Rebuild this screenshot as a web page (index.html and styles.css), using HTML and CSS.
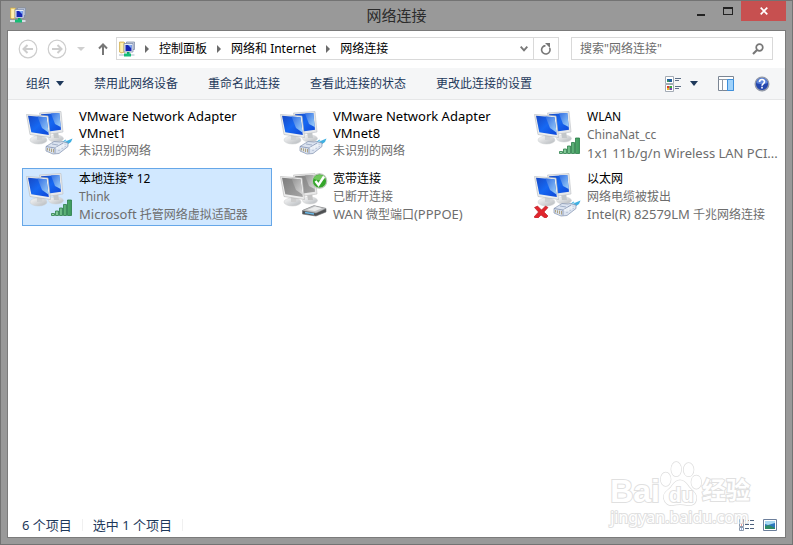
FILE: index.html
```html
<!DOCTYPE html>
<html lang="zh-CN">
<head>
  <meta charset="UTF-8">
  <meta name="viewport" content="width=device-width, initial-scale=1.0">
  <title>网络连接</title>
  <link rel="stylesheet" href="styles.css">
</head>
<body>

  <!-- Ícones reutilizados -->
  <svg class="defs" width="0" height="0" aria-hidden="true">
    <defs>
      <linearGradient id="azul" x1="0" y1="0" x2="1" y2="1">
        <stop offset="0" stop-color="#1748c4"/>
        <stop offset="0.5" stop-color="#1668f2"/>
        <stop offset="1" stop-color="#0f48d8"/>
      </linearGradient>
      <linearGradient id="brilho" x1="0" y1="0" x2="1" y2="1">
        <stop offset="0" stop-color="#2f6ce2"/>
        <stop offset="1" stop-color="#9fd2fa"/>
      </linearGradient>
      <linearGradient id="cinza" x1="0" y1="0" x2="1" y2="1">
        <stop offset="0" stop-color="#7d7d7d"/>
        <stop offset="1" stop-color="#a5a5a5"/>
      </linearGradient>
      <linearGradient id="cinzaBrilho" x1="0" y1="0" x2="1" y2="1">
        <stop offset="0" stop-color="#929292"/>
        <stop offset="1" stop-color="#d8d8d8"/>
      </linearGradient>
      <linearGradient id="base" x1="0" y1="0" x2="1" y2="1">
        <stop offset="0" stop-color="#fafafa"/>
        <stop offset="1" stop-color="#b4b8bc"/>
      </linearGradient>
      <linearGradient id="verde" x1="0" y1="0" x2="1" y2="0">
        <stop offset="0" stop-color="#9ad9ab"/>
        <stop offset="1" stop-color="#3c9a5b"/>
      </linearGradient>

      <symbol id="monitores" viewBox="0 0 48 48">
        <ellipse cx="30" cy="30.500" rx="7.500" ry="3.500" fill="url(#base)" stroke="#d0d3d6" stroke-width=".5"/>
        <path d="M27 24l5-1 1 7h-5z" fill="#c3c7ca"/>
        <path d="M13.500 5L35 3.500 37 24 18 27z" fill="#e6e8ea" stroke="#bcc0c4" stroke-width=".6"/>
        <path d="M15 6.300L33.300 5 35 21.800 19 24z" fill="url(#azul)"/>
        <path d="M25 5.600L33.300 5 34.700 19 29 16z" fill="url(#brilho)"/>
        <ellipse cx="12.500" cy="32" rx="8.500" ry="4" fill="url(#base)" stroke="#cbced1" stroke-width=".5"/>
        <path d="M11 25l6 1-1 6h-5z" fill="#cdd0d3"/>
        <path d="M.500 6.500L22 8 24.500 29.500 4 26.500z" fill="#eceeef" stroke="#b4b8bc" stroke-width=".6"/>
        <path d="M2 7.800L20.500 9.300 22.800 27 5.300 24.300z" fill="url(#azul)"/>
        <path d="M11.500 8.600L20.500 9.300 22.500 24.500 16 20z" fill="url(#brilho)"/>
      </symbol>

      <symbol id="monitores-off" viewBox="0 0 48 48">
        <ellipse cx="30" cy="30.500" rx="7.500" ry="3.500" fill="url(#base)" stroke="#d0d0d0" stroke-width=".5"/>
        <path d="M27 24l5-1 1 7h-5z" fill="#c3c3c3"/>
        <path d="M13.500 5L35 3.500 37 24 18 27z" fill="#e8e8e8" stroke="#bebebe" stroke-width=".6"/>
        <path d="M15 6.300L33.300 5 35 21.800 19 24z" fill="url(#cinza)"/>
        <path d="M25 5.600L33.300 5 34.700 19 29 16z" fill="url(#cinzaBrilho)"/>
        <ellipse cx="12.500" cy="32" rx="8.500" ry="4" fill="url(#base)" stroke="#cbcbcb" stroke-width=".5"/>
        <path d="M11 25l6 1-1 6h-5z" fill="#cdcdcd"/>
        <path d="M.500 6.500L22 8 24.500 29.500 4 26.500z" fill="#eee" stroke="#b4b4b4" stroke-width=".6"/>
        <path d="M2 7.800L20.500 9.300 22.800 27 5.300 24.300z" fill="url(#cinza)"/>
        <path d="M11.500 8.600L20.500 9.300 22.500 24.500 16 20z" fill="url(#cinzaBrilho)"/>
      </symbol>

      <symbol id="cabo" viewBox="0 0 48 48">
        <path d="M35.500 34.500l4-3 1 1.500 6-2.500-1.500 3.500-5 3.500z" fill="#3fb0e2"/>
        <path d="M36.500 34.500l3-2.300 1 1.500-2 1.800z" fill="#a3daf2"/>
        <path d="M20 38.500L28 33.500 34 34 36 33.500 42 35v3.500l-9 7-6 .5-7-3z" fill="#dbe3f0" stroke="#8191ae" stroke-width=".7"/>
        <path d="M20 38.500l9 1.500 8-5M29 40v5.500" fill="none" stroke="#8191ae" stroke-width=".8"/>
        <path d="M26 36l6 1M33 39v4M36 37.500V41M39 36v3" stroke="#92a2be" stroke-width=".8" fill="none"/>
        <path d="M29 40l8-4 4 1-8 5z" fill="#f3f6fa" opacity=".8"/>
        <path d="M21.500 40v2.500M23.500 40.300v3M25.500 40.600v3.400M27.500 41v3.500" stroke="#a39467" stroke-width=".8"/>
      </symbol>

      <symbol id="sinal" viewBox="0 0 48 48">
        <g fill="url(#verde)" stroke="#2a7c48" stroke-width=".8">
          <path d="M25.500 43.500h3v2h-3zM29.500 41h3v4.500h-3zM33.500 38h3v7.500h-3zM37.500 34.500h3v11h-3zM41.500 30h4v15.500h-4z"/>
        </g>
      </symbol>

      <symbol id="modem" viewBox="0 0 48 48">
        <path d="M22.500 42v-1.500L34 36l12 2.500v3.500l-10 4-13.500-2z" fill="#4e5052" stroke="#6a6c6e" stroke-width=".6"/>
        <path d="M22.500 40.500L34 35.500 46 38.500 36 43z" fill="#c2c4c6" stroke="#929496" stroke-width=".5"/>
        <path d="M27 40l8-3.500 7 1.800-7 2.700z" fill="#eceded"/>
        <path d="M25 42.500l9 1.500" stroke="#6ab8e6" stroke-width="1.300"/>
      </symbol>

      <symbol id="certo" viewBox="0 0 48 48">
        <circle cx="39.500" cy="11" r="7.200" fill="#35a62b" stroke="#b9c4b7" stroke-width="1.200"/>
        <path d="M33.500 8.500a6.300 5 0 0 1 12 0 8 5 0 0 1-12 0z" fill="#6fc75c"/>
        <path d="M35.500 11l3 4 5.500-8.500" fill="none" stroke="#fff" stroke-width="2.400"/>
      </symbol>

      <symbol id="erro" viewBox="0 0 48 48">
        <path d="M.500 37.500l3-1.500 4 4 4-4 2.500 1.500-4 4.500 4 4-2.500 2.500-4.500-3.500-4 4-3-2 4.500-5z" fill="#e0262d" stroke="#b3161d" stroke-width=".6"/>
      </symbol>

      <symbol id="rede" viewBox="0 0 16 16">
        <path d="M.500 1h4.500l1 1v9l-4 1-1.500-1z" fill="#f6dd82" stroke="#cda94a" stroke-width=".7"/>
        <path d="M1.500 2h2.500v9H1.500z" fill="#fff0b0"/>
        <path d="M7.500 1h8v7.500h-8z" fill="#c9d2e2" stroke="#7a86a0" stroke-width=".7"/>
        <path d="M5 2.500h9v8.500H5z" fill="#e6ebf4" stroke="#7585a8" stroke-width=".7"/>
        <path d="M6.500 4h6v6h-6z" fill="#1525b4"/>
        <path d="M9 4h3.500v3.500z" fill="#7facf5"/>
        <path d="M8 11h2.500v2H8z" fill="#0aa564"/>
        <path d="M0 14h15.500" stroke="#d5dce4" stroke-width="2"/>
        <path d="M5 12.500h7v3H5z" fill="#16bd76"/>
      </symbol>
    </defs>
  </svg>

  <div class="janela">
    <header class="titulo">
      <svg class="icone-pequeno" viewBox="0 0 16 16" aria-hidden="true"><use href="#rede"/></svg>
      <h1>网络连接</h1>
      <div class="controles">
        <button type="button" class="minimizar" aria-label="最小化">
          <svg width="10" height="10" viewBox="0 0 10 10"><path d="M1 8h8v2H1z" fill="#222"/></svg>
        </button>
        <button type="button" class="maximizar" aria-label="最大化">
          <svg width="10" height="8" viewBox="0 0 10 8"><path d="M0 0h10v8H0zM1 2v5h8V2z" fill="#222" fill-rule="evenodd"/></svg>
        </button>
        <button type="button" class="fechar" aria-label="关闭">
          <svg width="8" height="8" viewBox="0 0 8 8"><path d="M.7.700l6.600 6.600M7.300.700L.700 7.300" stroke="#fff" stroke-width="1.700"/></svg>
        </button>
      </div>
    </header>

    <div class="conteudo">
      <nav class="navegacao">
        <button type="button" aria-label="后退">
          <svg width="20" height="20" viewBox="0 0 20 20" fill="none" stroke="#cdcdcd"><circle cx="10" cy="10" r="8.800" stroke-width="1.200"/><path d="M15 10H6M9.500 6L5.500 10l4 4" stroke-width="2"/></svg>
        </button>
        <button type="button" class="avancar" aria-label="前进">
          <svg width="20" height="20" viewBox="0 0 20 20" fill="none" stroke="#cdcdcd"><circle cx="10" cy="10" r="8.800" stroke-width="1.200"/><path d="M5 10h9M10.500 6l4 4-4 4" stroke-width="2"/></svg>
        </button>
        <button type="button" class="recentes" aria-label="最近浏览的位置">
          <svg width="8" height="4" viewBox="0 0 8 4"><path d="M0 0h8L4 4z" fill="#cfcfcf"/></svg>
        </button>
        <button type="button" class="subir" aria-label="向上">
          <svg width="12" height="12" viewBox="0 0 12 12" fill="none" stroke="#777" stroke-width="2"><path d="M6 12V2M2 5.500L6 1.500l4 4"/></svg>
        </button>
        <div class="endereco">
          <svg class="icone-pequeno" viewBox="0 0 16 16" aria-hidden="true"><use href="#rede"/></svg>
          <svg class="seta" viewBox="0 0 4 8"><path d="M0 0l4 4-4 4z"/></svg>
          <a href="#">控制面板</a>
          <svg class="seta" viewBox="0 0 4 8"><path d="M0 0l4 4-4 4z"/></svg>
          <a href="#">网络和 Internet</a>
          <svg class="seta" viewBox="0 0 4 8"><path d="M0 0l4 4-4 4z"/></svg>
          <a href="#">网络连接</a>
          <button type="button" class="historico" aria-label="以前的位置">
            <svg width="8" height="6" viewBox="0 0 8 6"><path d="M.7.700L4 4.300 7.300.700" fill="none" stroke="#777" stroke-width="1.900"/></svg>
          </button>
          <button type="button" class="atualizar" aria-label="刷新">
            <svg width="12" height="12" viewBox="0 0 12 12"><path d="M9.600 5A4.200 4.200 0 1 1 5.500 2.600" fill="none" stroke="#777" stroke-width="1.600"/><path d="M5 0h5v5z" fill="#777"/></svg>
          </button>
        </div>
        <div class="busca">
          <input type="text" aria-label="搜索" placeholder='搜索"网络连接"'>
          <svg width="12" height="12" viewBox="0 0 12 12" fill="none" stroke="#777"><circle cx="7.500" cy="4.500" r="3.300" stroke-width="1.700"/><path d="M5 7L1 11" stroke-width="2.200"/></svg>
        </div>
      </nav>

      <div class="comandos">
        <button type="button" class="organizar">组织
          <svg width="8" height="5" viewBox="0 0 8 5"><path d="M0 0h8L4 5z" fill="#1e395b"/></svg>
        </button>
        <button type="button">禁用此网络设备</button>
        <button type="button">重命名此连接</button>
        <button type="button">查看此连接的状态</button>
        <button type="button">更改此连接的设置</button>
        <div class="direita">
          <button type="button" class="exibicao" aria-label="更改视图">
            <svg width="16" height="16" viewBox="0 0 16 16">
              <path d="M.5.500h8v7h-8zM.5 8.500h8v7h-8z" fill="#fff" stroke="#a3abb5"/>
              <path d="M2 3h5v3H2z" fill="#215f9c"/><path d="M2 4.500h2V6H2z" fill="#3a9a5b"/>
              <path d="M2 10h2.500v2H2z" fill="#d6392c"/><path d="M4.500 10H7v2H4.500z" fill="#35a53a"/>
              <path d="M2 12h2.500v2H2z" fill="#e9b91e"/><path d="M4.500 12H7v2H4.500z" fill="#7547b0"/>
              <path d="M10 2.500h6M10 4.500h4M10 10.500h6M10 12.500h4" stroke="#5d6f87"/>
            </svg>
            <svg width="8" height="5" viewBox="0 0 8 5"><path d="M0 0h8L4 5z" fill="#1e395b"/></svg>
          </button>
          <button type="button" aria-label="显示预览窗格">
            <svg width="16" height="16" viewBox="0 0 16 16">
              <path d="M.5.500h15v14h-15z" fill="#fff" stroke="#7b8694"/>
              <path d="M.5 3.500h15M4.500 3.500v11" stroke="#8f99a6"/>
              <path d="M9.500 3.500h6v11h-6z" fill="#9fd2fb" stroke="#3d8fdc"/>
            </svg>
          </button>
          <button type="button" aria-label="获取帮助">
            <svg width="16" height="16" viewBox="0 0 16 16">
              <circle cx="8" cy="8" r="6.800" fill="#2447ae" stroke="#9299a8" stroke-width="1.400"/>
              <path d="M2.500 7a5.500 5 0 0 1 11 0c-3 1.500-8 1.500-11 0z" fill="#5f87dc"/>
              <path d="M5.500 6c0-3.200 5-3.200 5-.2C10.500 7.500 8 7.600 8 9.800M8 10.800v1.700" fill="none" stroke="#fff" stroke-width="1.600"/>
            </svg>
          </button>
        </div>
      </div>

      <main class="lista">
        <div class="item">
          <svg class="icone" viewBox="0 0 48 48"><use href="#monitores"/><use href="#cabo"/></svg>
          <div class="texto">
            <h2 class="latino">VMware Network Adapter VMnet1</h2>
            <p>未识别的网络</p>
          </div>
        </div>
        <div class="item">
          <svg class="icone" viewBox="0 0 48 48"><use href="#monitores"/><use href="#cabo"/></svg>
          <div class="texto">
            <h2 class="latino">VMware Network Adapter VMnet8</h2>
            <p>未识别的网络</p>
          </div>
        </div>
        <div class="item">
          <svg class="icone" viewBox="0 0 48 48"><use href="#monitores"/><use href="#sinal"/></svg>
          <div class="texto">
            <h2>WLAN</h2>
            <p>ChinaNat_cc</p>
            <p class="latino">1x1 11b/g/n Wireless LAN PCI...</p>
          </div>
        </div>
        <div class="item selecionado">
          <svg class="icone" viewBox="0 0 48 48"><use href="#monitores"/><use href="#sinal"/></svg>
          <div class="texto">
            <h2>本地连接* 12</h2>
            <p>Think</p>
            <p><span class="latino">Microsoft</span> 托管网络虚拟适配器</p>
          </div>
        </div>
        <div class="item">
          <svg class="icone" viewBox="0 0 48 48"><use href="#monitores-off"/><use href="#modem"/><use href="#certo"/></svg>
          <div class="texto">
            <h2>宽带连接</h2>
            <p>已断开连接</p>
            <p><span class="latino">WAN</span> 微型端口<span class="latino">(PPPOE)</span></p>
          </div>
        </div>
        <div class="item">
          <svg class="icone" viewBox="0 0 48 48"><use href="#monitores"/><use href="#cabo"/><use href="#erro"/></svg>
          <div class="texto">
            <h2>以太网</h2>
            <p>网络电缆被拔出</p>
            <p><span class="latino">Intel(R) 82579LM</span> 千兆网络连接</p>
          </div>
        </div>
      </main>

      <footer class="status">
        <span>6 个项目</span>
        <span>选中 1 个项目</span>
        <div class="modos">
          <button type="button" aria-label="详细信息">
            <svg width="16" height="12" viewBox="0 0 16 12">
              <path d="M.5.500h4v3h-4zM.5 4.500h4v3h-4zM.5 8.500h4v3h-4z" fill="#fff" stroke="#8b99ad"/>
              <path d="M2 1.500h1v1H2z" fill="#3a9a5b"/><path d="M2 5.500h1v1H2z" fill="#d6392c"/><path d="M2 9.500h1v1H2z" fill="#2a62c9"/>
              <path d="M6 1.500h4M11 1.500h4M6 5.500h4M11 5.500h4M6 9.500h4M11 9.500h4" stroke="#4d617d"/>
            </svg>
          </button>
          <button type="button" aria-label="大图标">
            <svg width="14" height="12" viewBox="0 0 14 12">
              <path d="M.5.500h13v11H.5z" fill="#fff" stroke="#6c7f9b"/>
              <path d="M2 2h10v8H2z" fill="#2b77bd"/><path d="M2 2h10v2L5 6 2 5z" fill="#a7d8f2"/><path d="M2 7l4-1 6 3v1H2z" fill="#2f8a66"/>
            </svg>
          </button>
        </div>
      </footer>

      <div class="marca">
        <div class="marca-nome">
          <span>Bai</span>
          <span class="pata">
            <svg width="42" height="46" viewBox="0 0 44 48" fill="#fff" stroke="#dedede" stroke-width="1.500">
              <ellipse cx="6" cy="19" rx="5.200" ry="7"/>
              <ellipse cx="17" cy="8.500" rx="5.200" ry="7.500"/>
              <ellipse cx="30" cy="9" rx="5.200" ry="7"/>
              <ellipse cx="38" cy="22" rx="5.200" ry="7"/>
              <path d="M21 20c5 0 7 4 10 8 4 4 8 7 7 12-1 6-6 7-10 6-4-1-10-1-14 0-5 1-9-2-10-7-1-6 4-8 7-11 3-4 5-8 10-8z"/>
            </svg>
            <b>du</b>
          </span>
          <span class="marca-cn">经验</span>
        </div>
        <div class="marca-url">jingyan.baidu.com</div>
      </div>
    </div>
  </div>

</body>
</html>
```
FILE: styles.css
```css
* {
  box-sizing: border-box;
  margin: 0;
  padding: 0;
}

body {
  font-family: "Noto Sans", "Noto Sans CJK SC", sans-serif;
  font-size: 12px;
  line-height: 18px;
  color: #000;
}

button {
  display: flex;
  align-items: center;
  justify-content: center;
  font: inherit;
  color: inherit;
  background: none;
  border: none;
  cursor: pointer;
}

svg {
  display: block;
  flex-shrink: 0;
}

.defs {
  position: absolute;
}

/* JANELA */
.janela {
  display: flex;
  flex-direction: column;
  min-height: 100vh;
  padding: 0 6px 6px 6px;
  background-color: #999;
  border: 1px solid #737373;
}

.titulo {
  display: flex;
  align-items: flex-start;
  height: 29px;
  padding-left: 3px;
}

.titulo .icone-pequeno {
  margin-top: 6px;
}

.titulo h1 {
  flex: 1;
  padding-left: 80px;
  font-size: 15px;
  font-weight: normal;
  line-height: 28px;
  text-align: center;
  color: #2b2b2b;
}

.icone-pequeno {
  width: 16px;
  height: 16px;
}

.controles {
  display: flex;
}

.controles button {
  width: 27px;
  height: 20px;
}

.controles .fechar {
  width: 45px;
  background-color: #c75050;
}

.controles .fechar:hover {
  background-color: #e04343;
}

.conteudo {
  position: relative;
  flex: 1;
  display: flex;
  flex-direction: column;
  background-color: #fff;
  border: 1px solid #7b7b7b;
}

/* NAVEGAÇÃO */
.navegacao {
  display: flex;
  align-items: center;
  height: 37px;
  padding: 0 12px 2px 10px;
}

.avancar {
  margin-left: 9px;
}

.recentes {
  margin-left: 10px;
}

.subir {
  margin: 0 7px 0 12px;
}

.endereco,
.busca {
  display: flex;
  align-items: center;
  height: 23px;
  border: 1px solid #d9d9d9;
}

.endereco {
  flex: 1;
  padding-left: 2px;
}

.endereco a {
  color: #000;
  text-decoration: none;
  white-space: nowrap;
}

.seta {
  width: 4px;
  height: 8px;
  margin: 0 10px;
  fill: #6b6b6b;
}

.historico {
  width: 18px;
  height: 21px;
  margin-left: auto;
}

.atualizar {
  width: 25px;
  height: 21px;
  border-left: 1px solid #d9d9d9;
}

.busca {
  width: 202px;
  margin-left: 12px;
  padding: 0 8px;
}

.busca input {
  flex: 1;
  min-width: 0;
  font: inherit;
  border: none;
  outline: none;
}

.busca input::placeholder {
  color: #6d6d6d;
}

/* BARRA DE COMANDOS */
.comandos {
  display: flex;
  align-items: center;
  gap: 30px;
  height: 32px;
  padding: 0 15px 0 18px;
  background-color: #f5f6f7;
  border-bottom: 1px solid #e6e7e8;
  color: #1e395b;
  white-space: nowrap;
}

.organizar {
  gap: 6px;
}

.direita {
  display: flex;
  align-items: center;
  gap: 20px;
  margin-left: auto;
}

.exibicao {
  gap: 9px;
}

/* LISTA DE CONEXÕES */
.lista {
  flex: 1;
  display: grid;
  grid-template-columns: repeat(auto-fill, 250px);
  align-content: start;
  gap: 4px;
  padding: 6px 0 6px 14px;
}

.item {
  display: flex;
  gap: 5px;
  height: 58px;
  padding: 1px 0 0 3px;
  border: 1px solid transparent;
}

.item.selecionado {
  background-color: #d1e8ff;
  border-color: #66a7e8;
}

.icone {
  width: 48px;
  height: 48px;
}

.texto {
  flex: 1;
  min-width: 0;
}

.texto h2 {
  font-size: 12px;
  font-weight: normal;
}

.texto p {
  color: #6d6d6d;
  white-space: nowrap;
}

.texto .latino {
  font-size: 13px;
}

.texto h2.latino {
  line-height: 17px;
}

.texto p.latino {
  overflow: hidden;
  text-overflow: ellipsis;
}

.texto span.latino {
  line-height: 12px;
}

/* BARRA DE STATUS */
.status {
  display: flex;
  align-items: center;
  height: 25px;
  padding: 0 8px 0 14px;
  font-size: 13px;
  color: #1e395b;
}

.status span {
  margin-right: 10px;
  padding-right: 10px;
  line-height: 12px;
  border-right: 1px solid #f0f0f0;
}

.modos {
  display: flex;
  gap: 8px;
  margin-left: auto;
}

/* MARCA D'ÁGUA */
.marca {
  position: absolute;
  right: 35px;
  bottom: 10px;
  font-family: "Noto Sans", "Noto Sans CJK SC", sans-serif;
  color: #fff;
  -webkit-text-stroke: 2px #e0e0e0;
  paint-order: stroke fill;
  pointer-events: none;
}

.marca-nome {
  display: flex;
  align-items: flex-end;
  font-family: "Liberation Sans", "Noto Sans CJK SC", sans-serif;
  font-size: 32px;
  font-weight: bold;
  line-height: 32px;
}

.pata {
  position: relative;
}

.pata b {
  position: absolute;
  left: 9px;
  bottom: 0;
  font-size: 20px;
  line-height: 24px;
}

.marca-cn {
  font-size: 24px;
}

.marca-url {
  font-size: 16px;
  line-height: 20px;
}
```
